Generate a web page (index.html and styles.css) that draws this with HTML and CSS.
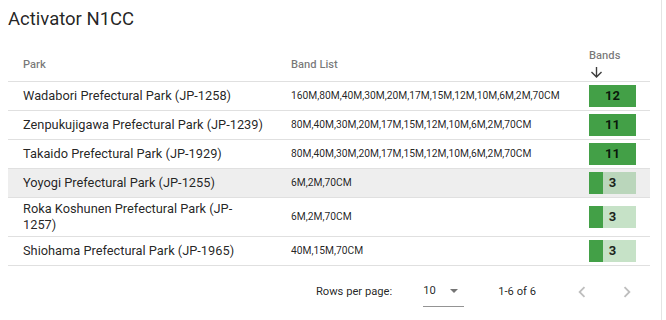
FILE: index.html
```html
<!DOCTYPE html>
<html lang="en">
<head>
<meta charset="utf-8">
<title>Activator N1CC</title>
<link rel="stylesheet" href="styles.css">
</head>
<body>
<div class="card">
  <h2 class="title">Activator N1CC</h2>
  <table class="tbl">
    <colgroup>
      <col class="c-park">
      <col class="c-list">
      <col class="c-bands">
    </colgroup>
    <thead>
      <tr>
        <th class="th-text">Park</th>
        <th class="th-text">Band List</th>
        <th class="th-sort">
          <div class="sort-label">Bands</div>
          <svg class="sort-icon" viewBox="4 4 16 16" width="11" height="11"><path d="M20 12l-1.41-1.41L13 16.17V4h-2v12.17l-5.58-5.59L4 12l8 8 8-8z"/></svg>
        </th>
      </tr>
    </thead>
    <tbody>
      <tr>
        <td class="park">Wadabori Prefectural Park (JP-1258)</td>
        <td class="list">160M,80M,40M,30M,20M,17M,15M,12M,10M,6M,2M,70CM</td>
        <td class="bands"><div class="bar"><div class="fill" style="width:100%"></div><span class="num">12</span></div></td>
      </tr>
      <tr>
        <td class="park">Zenpukujigawa Prefectural Park (JP-1239)</td>
        <td class="list">80M,40M,30M,20M,17M,15M,12M,10M,6M,2M,70CM</td>
        <td class="bands"><div class="bar"><div class="fill" style="width:100%"></div><span class="num">11</span></div></td>
      </tr>
      <tr>
        <td class="park">Takaido Prefectural Park (JP-1929)</td>
        <td class="list">80M,40M,30M,20M,17M,15M,12M,10M,6M,2M,70CM</td>
        <td class="bands"><div class="bar"><div class="fill" style="width:100%"></div><span class="num">11</span></div></td>
      </tr>
      <tr class="hover">
        <td class="park">Yoyogi Prefectural Park (JP-1255)</td>
        <td class="list">6M,2M,70CM</td>
        <td class="bands"><div class="bar"><div class="fill" style="width:30%"></div><span class="num">3</span></div></td>
      </tr>
      <tr>
        <td class="park">Roka Koshunen Prefectural Park (JP-<wbr>1257)</td>
        <td class="list">6M,2M,70CM</td>
        <td class="bands"><div class="bar"><div class="fill" style="width:30%"></div><span class="num">3</span></div></td>
      </tr>
      <tr>
        <td class="park">Shiohama Prefectural Park (JP-1965)</td>
        <td class="list">40M,15M,70CM</td>
        <td class="bands"><div class="bar"><div class="fill" style="width:30%"></div><span class="num">3</span></div></td>
      </tr>
    </tbody>
  </table>
  <div class="pager">
    <span class="caption">Rows per page:</span>
    <div class="select">
      <span class="select-val">10</span>
      <svg class="select-icon" viewBox="7 10 10 5" width="8" height="4"><path d="M7 10l5 5 5-5z"/></svg>
    </div>
    <span class="range">1-6 of 6</span>
    <div class="actions">
      <span class="nav-btn"><svg viewBox="0 0 24 24" width="22" height="22"><path d="M15.41 7.41L14 6l-6 6 6 6 1.41-1.41L10.83 12z"/></svg></span>
      <span class="nav-btn"><svg viewBox="0 0 24 24" width="22" height="22"><path d="M10 6L8.59 7.41 13.17 12l-4.58 4.58L10 18l6-6z"/></svg></span>
    </div>
  </div>
</div>
</body>
</html>
```

FILE: styles.css
```css
html, body {
  margin: 0;
  padding: 0;
  background: #ffffff;
}

body {
  font-family: Roboto, "Liberation Sans", Arial, sans-serif;
  color: rgba(0, 0, 0, 0.87);
}

.card {
  box-sizing: border-box;
  width: 662px;
  min-height: 320px;
  padding: 7px 11px 0 8px;
  border-right: 1px solid #e4e4e4;
  background: #ffffff;
}

.title {
  margin: 0;
  font-size: 18.5px;
  line-height: 24px;
  font-weight: 400;
  color: rgba(0, 0, 0, 0.87);
}

.tbl {
  margin-top: 15px;
  width: 642px;
  table-layout: fixed;
  border-collapse: separate;
  border-spacing: 0;
}

.c-park { width: 268px; }
.c-list { width: 298px; }
.c-bands { width: 76px; }

.tbl th,
.tbl td {
  border-bottom: 1px solid #e0e0e0;
  text-align: left;
  vertical-align: middle;
  padding-top: 3px;
  padding-bottom: 3px;
}

.tbl th:first-child,
.tbl td:first-child {
  padding-left: 15px;
  padding-right: 12.5px;
}

.tbl th:nth-child(2),
.tbl td:nth-child(2) {
  padding-left: 15px;
  padding-right: 8px;
}

.tbl th:last-child,
.tbl td:last-child {
  padding-left: 15px;
  padding-right: 14px;
}

.tbl th {
  font-size: 11.2px;
  line-height: 14px;
  font-weight: 500;
  color: rgba(0, 0, 0, 0.54);
}

.tbl th.th-text {
  padding-top: 6px;
}

.th-sort {
  color: rgba(0, 0, 0, 0.87);
}

.sort-label {
  line-height: 14px;
}

.sort-icon {
  display: block;
  margin: 4px 0 0 2px;
  fill: rgba(0, 0, 0, 0.76);
}

.park {
  font-size: 12.8px;
  line-height: 16px;
}

.list {
  font-size: 10.25px;
  line-height: 16px;
}

.hover td {
  background: #eeeeee;
}

.bar {
  display: grid;
  width: 47px;
  height: 22px;
  background: rgba(67, 160, 71, 0.3);
}

.fill {
  grid-area: 1 / 1;
  justify-self: start;
  height: 22px;
  background: #43a047;
}

.num {
  grid-area: 1 / 1;
  place-self: center;
  font-size: 13px;
  line-height: 16px;
  font-weight: 700;
  color: rgba(0, 0, 0, 0.87);
}

.pager {
  display: flex;
  align-items: center;
  justify-content: flex-end;
  height: 51px;
  padding-right: 1px;
  font-size: 11.2px;
  color: rgba(0, 0, 0, 0.87);
}

.select {
  display: flex;
  align-items: center;
  box-sizing: border-box;
  width: 41px;
  margin-left: 31px;
  padding: 7px 0;
  border-bottom: 1px solid rgba(0, 0, 0, 0.42);
  line-height: 16px;
}

.select-icon {
  margin-left: auto;
  margin-right: 6px;
  fill: rgba(0, 0, 0, 0.54);
}

.range {
  margin-left: 34px;
}

.actions {
  display: flex;
  margin-left: 23px;
}

.nav-btn {
  display: flex;
  align-items: center;
  justify-content: center;
  width: 45px;
  height: 45px;
}

.nav-btn svg {
  fill: rgba(0, 0, 0, 0.26);
}
```
